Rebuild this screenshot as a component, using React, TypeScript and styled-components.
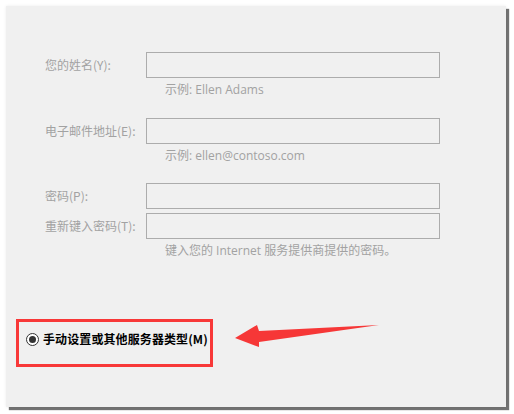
import React from "react";
import styled, { createGlobalStyle } from "styled-components";

const Global = createGlobalStyle`
  html, body { margin: 0; padding: 0; background: #ffffff; }
  body { font-family: "Noto Sans CJK SC", "Noto Sans", sans-serif; }
  * { box-sizing: border-box; }
`;

const Page = styled.div`
  width: 514px;
  height: 414px;
  padding: 6px 0 0 6px;
`;

const Panel = styled.div`
  width: 500px;
  height: 401px;
  background: #f0f0f0;
  box-shadow: 0 0 3px rgba(0, 0, 0, 0.08), 3px 3px 1px rgba(0, 0, 0, 0.55);
  display: flex;
  flex-direction: column;
  padding: 46px 0 0 10px;
`;

const Form = styled.div`
  display: flex;
  flex-direction: column;
  padding-left: 29px;
`;

const FieldRow = styled.div<{ $gap?: number }>`
  display: grid;
  grid-template-columns: 101px 294px;
  align-items: center;
  height: 26px;
  margin-top: ${(p) => p.$gap ?? 0}px;
`;

const Label = styled.label`
  font-size: 12px;
  color: #a2a2a2;
  white-space: nowrap;
  line-height: 16px;
`;

const Input = styled.div`
  height: 26px;
  border: 1px solid #acacac;
  background: #f0f0f0;
`;

const Hint = styled.div`
  margin-left: 120px;
  margin-top: 4px;
  height: 16px;
  font-size: 12px;
  line-height: 16px;
  color: #a2a2a2;
  font-family: "Open Sans", "Noto Sans CJK SC", sans-serif;
  white-space: nowrap;
`;

const OptionRow = styled.div`
  display: flex;
  align-items: flex-start;
  margin-top: 60px;
`;

const Highlight = styled.div`
  display: flex;
  align-items: center;
  gap: 4px;
  border: 3px solid #f83838;
  padding: 6px 2px 14px 7px;
  height: 48px;
`;

const Radio = styled.span`
  width: 13px;
  height: 13px;
  border-radius: 50%;
  border: 1px solid #333333;
  background: #ffffff;
  display: flex;
  align-items: center;
  justify-content: center;
  &::after {
    content: "";
    width: 7px;
    height: 7px;
    border-radius: 50%;
    background: #333333;
  }
`;

const OptionText = styled.span`
  font-size: 12px;
  font-weight: 700;
  color: #000000;
  line-height: 20px;
  white-space: nowrap;
  letter-spacing: 0.1px;
`;

const Arrow = styled.svg`
  margin-left: 20px;
  flex: none;
`;

export default function App() {
  return (
    <>
      <Global />
      <Page>
        <Panel>
          <Form>
            <FieldRow>
              <Label>您的姓名(Y):</Label>
              <Input />
            </FieldRow>
            <Hint>示例: Ellen Adams</Hint>
            <FieldRow $gap={20}>
              <Label>电子邮件地址(E):</Label>
              <Input />
            </FieldRow>
            <Hint>示例: ellen@contoso.com</Hint>
            <FieldRow $gap={19}>
              <Label>密码(P):</Label>
              <Input />
            </FieldRow>
            <FieldRow $gap={4}>
              <Label>重新键入密码(T):</Label>
              <Input />
            </FieldRow>
            <Hint>键入您的 Internet 服务提供商提供的密码。</Hint>
          </Form>
          <OptionRow>
            <Highlight>
              <Radio />
              <OptionText>手动设置或其他服务器类型(M)</OptionText>
            </Highlight>
            <Arrow width="146" height="48" viewBox="232 321 146 48">
              <polygon
                points="234,340 256,327 258,333 378,327 258,344 258,349"
                fill="#f63737"
              />
            </Arrow>
          </OptionRow>
        </Panel>
      </Page>
    </>
  );
}
